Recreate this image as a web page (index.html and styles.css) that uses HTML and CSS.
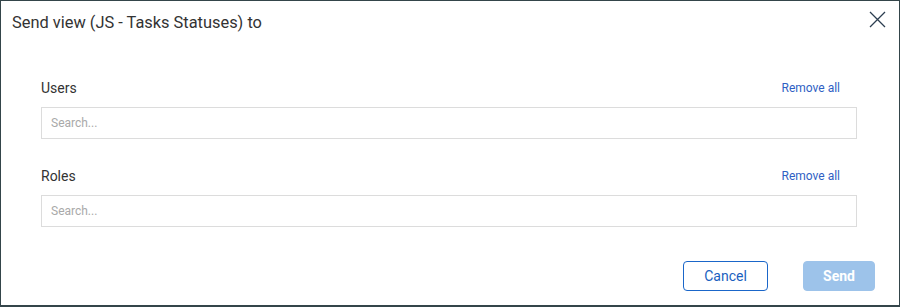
FILE: index.html
```html
<!DOCTYPE html>
<html>
<head>
    <link rel="stylesheet" href="styles.css">
</head>
<body>
    <div class="dialog">
        <div class="dialog_header">
            <div class="dialog_title">Send view (JS - Tasks Statuses) to</div>
            <div class="close_btn">
                <svg width="17" height="17" viewBox="0 0 17 17">
                    <path d="M1 1 L16 16 M16 1 L1 16" stroke="#2c3e50" stroke-width="1.3" fill="none"/>
                </svg>
            </div>
        </div>

        <div class="dialog_body">
            <div class="field">
                <div class="field_top">
                    <span class="field_label">Users</span>
                    <span class="remove_all">Remove all</span>
                </div>
                <input type="text" class="search_input" placeholder="Search...">
            </div>
            <div class="field">
                <div class="field_top">
                    <span class="field_label">Roles</span>
                    <span class="remove_all">Remove all</span>
                </div>
                <input type="text" class="search_input" placeholder="Search...">
            </div>
        </div>

        <div class="dialog_footer">
            <div class="btn btn_cancel">Cancel</div>
            <div class="btn btn_send">Send</div>
        </div>
    </div>
</body>
</html>
```

FILE: styles.css
```css
body {
    margin: 0;
    padding: 0;
    font-family: Roboto, "Liberation Sans", sans-serif;
    background: #ffffff;
}
.dialog {
    box-sizing: border-box;
    width: 900px;
    height: 307px;
    border: 1px solid #34454a;
    border-bottom-width: 2px;
    background: #ffffff;
}
.dialog_header {
    display: flex;
    justify-content: space-between;
    align-items: flex-start;
    padding: 12px 13px 0 11px;
    height: 44px;
    box-sizing: border-box;
}
.dialog_title {
    font-size: 16.4px;
    line-height: 20px;
    color: #333333;
}
.close_btn {
    margin-top: -2px;
    cursor: pointer;
}
.dialog_body {
    padding: 33px 42px 0 40px;
}
.field {
    margin-bottom: 27px;
}
.field_top {
    display: flex;
    justify-content: space-between;
    align-items: center;
    height: 20px;
    margin-bottom: 9px;
    padding-right: 17px;
}
.field_label {
    font-size: 14px;
    color: #333333;
}
.remove_all {
    font-size: 12px;
    color: #2f5fc4;
    cursor: pointer;
}
.search_input {
    display: block;
    box-sizing: border-box;
    width: 100%;
    height: 32px;
    border: 1px solid #dcdcdc;
    padding: 0 9px;
    font-family: Roboto, "Liberation Sans", sans-serif;
    font-size: 12px;
    outline: none;
}
.search_input::placeholder {
    color: #a9a9a9;
}
.dialog_footer {
    display: flex;
    justify-content: flex-end;
    gap: 35px;
    padding: 7px 24px 0 0;
}
.btn {
    box-sizing: border-box;
    height: 30px;
    line-height: 28px;
    text-align: center;
    font-size: 14px;
    border-radius: 4px;
    cursor: pointer;
}
.btn_cancel {
    width: 85px;
    border: 1px solid #1a66c9;
    color: #1a5fc0;
}
.btn_send {
    width: 72px;
    border: 1px solid #9dc3ea;
    background: #9dc3ea;
    color: #ffffff;
    font-weight: bold;
}
```
